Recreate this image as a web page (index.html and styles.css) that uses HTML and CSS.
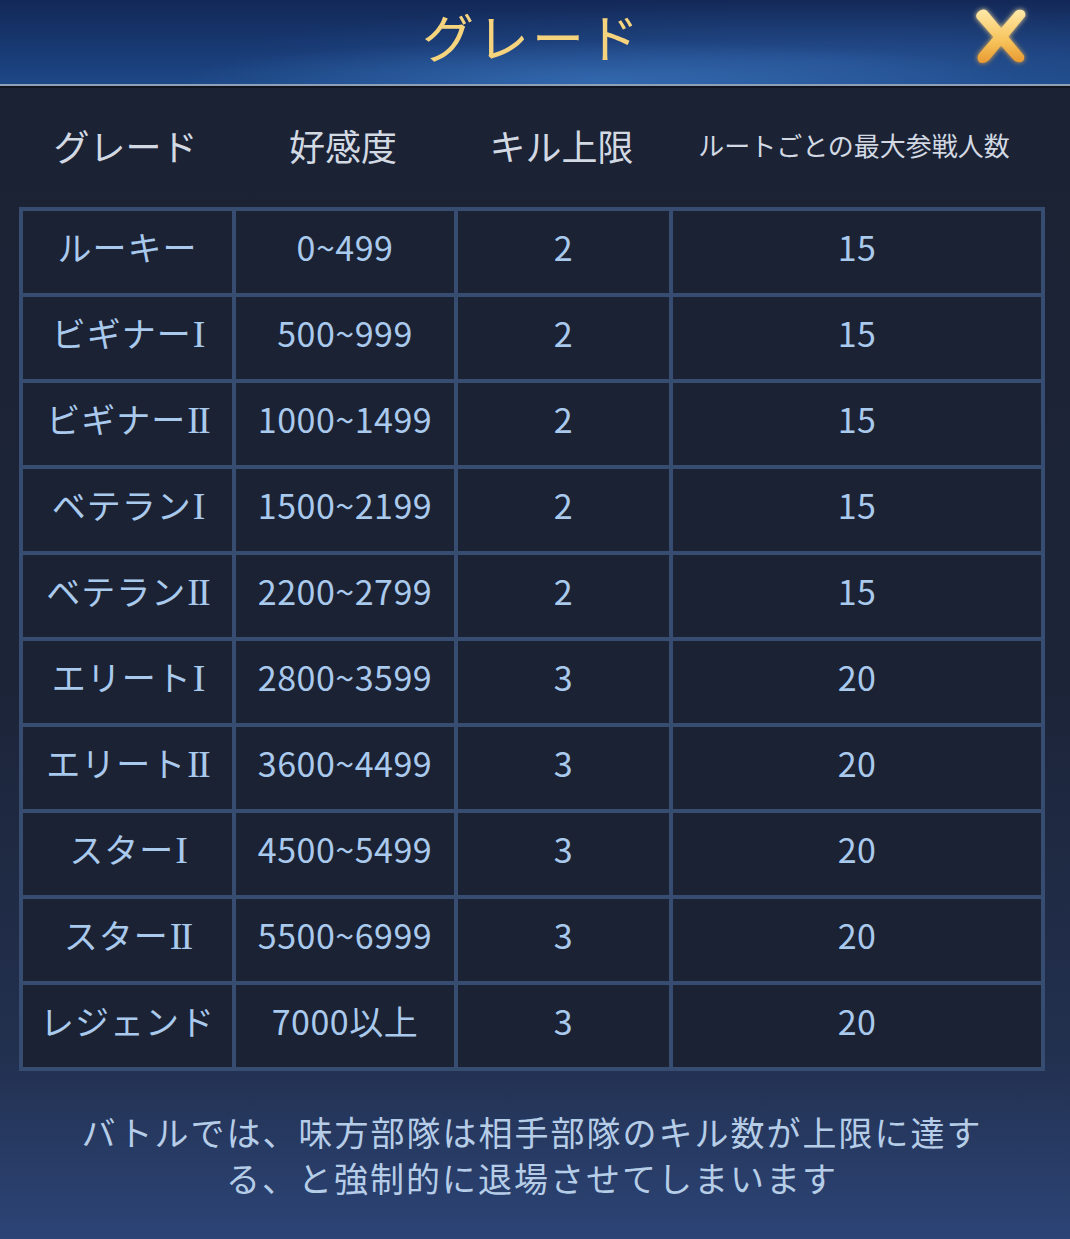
FILE: index.html
```html
<!DOCTYPE html>
<html lang="ja">
<head>
  <meta charset="UTF-8" />
  <meta name="viewport" content="width=device-width, initial-scale=1.0"/>
  <title>グレード</title>
  <link rel="stylesheet" href="styles.css">
</head>
<body>

  <!-- HEADER -->
  <div class="header">
    <h1>グレード</h1>
    <span class="close-btn">
      <svg width="70" height="70" viewBox="0 0 64 64">
        <defs>
          <linearGradient id="gold" x1="0" y1="0" x2="0" y2="1">
            <stop offset="0" stop-color="#ffe9a8"/>
            <stop offset="0.6" stop-color="#f7c25a"/>
            <stop offset="1" stop-color="#e89a32"/>
          </linearGradient>
          <filter id="glow" x="-30%" y="-30%" width="160%" height="160%">
            <feGaussianBlur stdDeviation="2.2" result="b"/>
            <feMerge><feMergeNode in="b"/><feMergeNode in="SourceGraphic"/></feMerge>
          </filter>
        </defs>
        <g filter="url(#glow)" fill="url(#gold)">
          <path d="M12 10 Q16 6 20 9 L54 50 Q55 56 49 56 Q45 55 43 52 L11 16 Q9 13 12 10 Z"/>
          <path d="M50 8 Q56 8 55 14 L22 54 Q18 58 13 56 Q10 52 13 48 L45 11 Q47 8 50 8 Z"/>
        </g>
      </svg>
    </span>
  </div>

  <!-- GRADE TABLE -->
  <div class="content">
    <div class="col-heads">
      <span>グレード</span>
      <span>好感度</span>
      <span>キル上限</span>
      <span class="small">ルートごとの最大参戦人数</span>
    </div>

    <table class="grades">
      <colgroup>
        <col class="c1"><col class="c2"><col class="c3"><col class="c4">
      </colgroup>
      <tr><td>ルーキー</td><td>0~499</td><td>2</td><td>15</td></tr>
      <tr><td>ビギナー<span class="rn">I</span></td><td>500~999</td><td>2</td><td>15</td></tr>
      <tr><td>ビギナー<span class="rn">II</span></td><td>1000~1499</td><td>2</td><td>15</td></tr>
      <tr><td>ベテラン<span class="rn">I</span></td><td>1500~2199</td><td>2</td><td>15</td></tr>
      <tr><td>ベテラン<span class="rn">II</span></td><td>2200~2799</td><td>2</td><td>15</td></tr>
      <tr><td>エリート<span class="rn">I</span></td><td>2800~3599</td><td>3</td><td>20</td></tr>
      <tr><td>エリート<span class="rn">II</span></td><td>3600~4499</td><td>3</td><td>20</td></tr>
      <tr><td>スター<span class="rn">I</span></td><td>4500~5499</td><td>3</td><td>20</td></tr>
      <tr><td>スター<span class="rn">II</span></td><td>5500~6999</td><td>3</td><td>20</td></tr>
      <tr><td>レジェンド</td><td>7000以上</td><td>3</td><td>20</td></tr>
    </table>

    <p class="note">バトルでは、味方部隊は相手部隊のキル数が上限に達す<br>る、と強制的に退場させてしまいます</p>
  </div>

</body>
</html>
```

FILE: styles.css
```css
/* Reset & Base */
* { box-sizing: border-box; margin: 0; padding: 0; }
html, body { height: 100%; }
body {
  font-family: "Noto Sans CJK JP", "Noto Sans", sans-serif;
  background: linear-gradient(180deg, #1b2233 0%, #1c2438 55%, #22304f 85%, #2c4476 100%);
  color: #a9c9ed;
  overflow: hidden;
}

/* Header */
.header {
  position: relative;
  height: 86px;
  display: flex;
  justify-content: center;
  align-items: center;
  background:
    radial-gradient(ellipse 420px 40px at 600px 80px, rgba(80,150,230,0.35), transparent),
    radial-gradient(ellipse 600px 60px at 820px 60px, rgba(70,130,210,0.25), transparent),
    linear-gradient(180deg, #132857 0%, #183a74 60%, #1d4886 100%);
  border-bottom: 2px solid #8f9fb8;
  box-shadow: 0 2px 0 #10151f;
}
.header h1 {
  font-size: 52px;
  line-height: 70px;
  font-weight: 400;
  color: #f6d47e;
  letter-spacing: 3px;
  margin-bottom: 12px;
  margin-left: -6px;
}
.close-btn {
  position: absolute;
  left: 965px;
  top: 1px;
  width: 70px;
  height: 70px;
}

/* Content */
.content {
  padding: 0 29px 0 19px;
}
.col-heads {
  display: grid;
  grid-template-columns: 213px 222px 215px 372px;
  height: 121px;
  align-items: center;
  color: #d2d9e3;
  font-size: 36px;
  text-align: center;
  padding-bottom: 4px;
}
.col-heads span { display: block; }
.col-heads .small {
  font-size: 26px;
  margin-left: -2px;
}

/* Table */
.grades {
  width: 1022px;
  height: 860px;
  table-layout: fixed;
  border-collapse: collapse;
  border: 4px solid #34496b;
  background: #1b2233;
}
.grades .c1 { width: 213px; }
.grades .c2 { width: 222px; }
.grades .c3 { width: 215px; }
.grades .c4 { width: 372px; }
.grades td {
  height: 86px;
  border: 4px solid #364c70;
  text-align: center;
  font-size: 34px;
  color: #a9c9ed;
  white-space: nowrap;
  padding: 0 0 12px;
  letter-spacing: 0.5px;
  overflow: hidden;
}
.grades td:first-child {
  letter-spacing: 1px;
}
.grades .rn {
  font-family: "Liberation Serif", "DejaVu Serif", serif;
  font-size: 38px;
  letter-spacing: -2px;
  margin-left: 1px;
}

/* Note */
.note {
  padding-top: 38px;
  padding-left: 4px;
  text-align: center;
  font-size: 34px;
  line-height: 46px;
  color: #b6cde8;
  letter-spacing: 2px;
}
```
